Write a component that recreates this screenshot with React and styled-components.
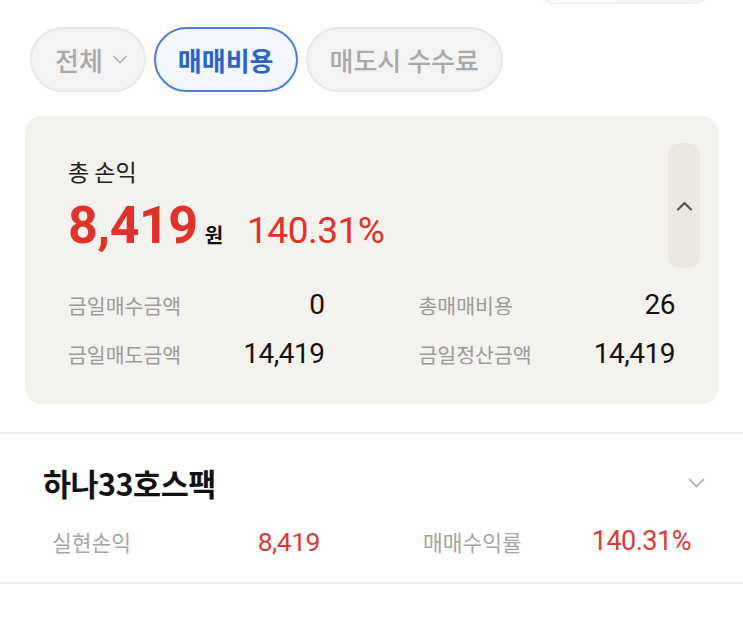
import React from 'react';
import styled, { createGlobalStyle } from 'styled-components';

const GlobalStyle = createGlobalStyle`
    body {
        margin: 0;
        background: #ffffff;
        font-family: Roboto, "Noto Sans CJK KR", sans-serif;
        color: #111111;
    }
`;

const Page = styled.div`
    width: 743px;
    min-height: 631px;
    background: #ffffff;
`;

const TopBar = styled.div`
    height: 4px;
    overflow: hidden;
    display: flex;
    align-items: flex-end;
    justify-content: flex-end;
    padding-right: 31px;
`;
const Segment = styled.div`
    flex-shrink: 0;
    width: 174px;
    height: 40px;
    border-radius: 20px;
    border: 1px solid #ececec;
    box-shadow: 0 1px 2px rgba(0, 0, 0, 0.05);
    background: linear-gradient(to right, #ffffff 0 45%, #f2f2f2 45% 100%);
    box-sizing: border-box;
`;

const ChipRow = styled.nav`
    display: flex;
    gap: 8px;
    padding: 23px 0 0 30px;
`;
const Chip = styled.button`
    height: 65px;
    box-sizing: border-box;
    display: flex;
    align-items: center;
    gap: 9px;
    padding: ${(p) => p.$pad || '0 24px'};
    border-radius: 33px;
    border: 2px solid ${(p) => (p.$active ? '#4c7fd8' : '#e8e8e8')};
    background: ${(p) => (p.$active ? '#f4f8fe' : '#f3f3f3')};
    color: ${(p) => (p.$active ? '#2d63c9' : '#a9a9a9')};
    font-family: "Noto Sans CJK KR", sans-serif;
    font-size: 26px;
    font-weight: ${(p) => (p.$active ? 700 : 500)};
    cursor: pointer;
`;

const Card = styled.section`
    margin: 24px 25px 0 25px;
    padding: 27px 18px 26px 43px;
    border-radius: 16px;
    background: #f4f2ed;
`;
const CardHeader = styled.div`
    display: flex;
    justify-content: space-between;
    margin-bottom: 12px;
`;
const Summary = styled.div`
    padding-top: 13px;
    display: flex;
    flex-direction: column;
    gap: 10px;
`;
const SummaryTitle = styled.div`
    font-family: "Noto Sans CJK KR", sans-serif;
    font-size: 23px;
    line-height: 30px;
    color: #222222;
`;
const AmountLine = styled.div`
    display: flex;
    align-items: baseline;
    height: 60px;
    line-height: 60px;
`;
const Amount = styled.span`
    font-size: 52px;
    font-weight: 700;
    color: #e0312a;
    letter-spacing: -0.5px;
`;
const Unit = styled.span`
    font-family: "Noto Sans CJK KR", sans-serif;
    font-size: 20px;
    font-weight: 700;
    color: #111111;
    margin-left: 7px;
`;
const Rate = styled.span`
    font-size: 37px;
    color: #e0312a;
    margin-left: 24px;
    letter-spacing: -0.5px;
`;
const Toggle = styled.button`
    width: 32px;
    height: 125px;
    border: none;
    border-radius: 12px;
    background: #ebe8e0;
    display: flex;
    align-items: center;
    justify-content: center;
    padding: 0;
`;

const StatGrid = styled.div`
    display: grid;
    grid-template-columns: 1fr 1fr;
    column-gap: ${(p) => p.$gap || '94px'};
    margin: ${(p) => p.$margin || '0 25px 0 0'};
`;
const Stat = styled.div`
    display: flex;
    justify-content: space-between;
    align-items: center;
    height: ${(p) => p.$height || '49px'};
`;
const StatLabel = styled.span`
    font-family: "Noto Sans CJK KR", sans-serif;
    font-size: ${(p) => p.$size || '20.5px'};
    color: ${(p) => p.$color || '#9b9b9b'};
`;
const StatValue = styled.span`
    font-size: ${(p) => p.$size || '28px'};
    color: ${(p) => p.$color || '#141414'};
    letter-spacing: -0.5px;
`;

const Divider = styled.div`
    height: 2px;
    background: #f3f3f3;
    margin-top: ${(p) => p.$top || '0'};
`;

const Stock = styled.section`
    padding: 29px 38px 26px 43px;
`;
const StockHeader = styled.div`
    display: flex;
    justify-content: space-between;
    align-items: center;
    height: 40px;
    margin-bottom: 23px;
`;
const StockName = styled.h2`
    margin: 0;
    font-family: "Noto Sans CJK KR", sans-serif;
    font-size: 30.5px;
    font-weight: 700;
    letter-spacing: -0.5px;
    color: #111111;
`;

const ChevronDown = ({ color = '#a9a9a9', w = 17, h = 10, sw = 1.8 }) => (
    <svg width={w} height={h} viewBox="0 0 17 10" fill="none">
        <path d="M1.5 1.5 L8.5 8.5 L15.5 1.5" stroke={color} strokeWidth={sw} strokeLinecap="round" strokeLinejoin="round" />
    </svg>
);

const ChevronUp = () => (
    <svg width="17" height="10" viewBox="0 0 17 10" fill="none">
        <path d="M2 8.5 L8.5 2 L15 8.5" stroke="#555555" strokeWidth="2.2" strokeLinecap="round" strokeLinejoin="round" />
    </svg>
);

const cardStats = [
    { label: '금일매수금액', value: '0' },
    { label: '총매매비용', value: '26' },
    { label: '금일매도금액', value: '14,419' },
    { label: '금일정산금액', value: '14,419' },
];

const App = () => {
    return (
        <Page>
            <GlobalStyle />
            <TopBar>
                <Segment />
            </TopBar>

            <ChipRow>
                <Chip $pad="0 16px 0 23px">
                    전체
                    <ChevronDown color="#b0b0b0" w={16} h={9} sw={1.6} />
                </Chip>
                <Chip $active $pad="0 22px">매매비용</Chip>
                <Chip $pad="0 22px">매도시 수수료</Chip>
            </ChipRow>

            <Card>
                <CardHeader>
                    <Summary>
                        <SummaryTitle>총 손익</SummaryTitle>
                        <AmountLine>
                            <Amount>8,419</Amount>
                            <Unit>원</Unit>
                            <Rate>140.31%</Rate>
                        </AmountLine>
                    </Summary>
                    <Toggle>
                        <ChevronUp />
                    </Toggle>
                </CardHeader>
                <StatGrid>
                    {cardStats.map((s) => (
                        <Stat key={s.label}>
                            <StatLabel>{s.label}</StatLabel>
                            <StatValue>{s.value}</StatValue>
                        </Stat>
                    ))}
                </StatGrid>
            </Card>

            <Divider $top="28px" />

            <Stock>
                <StockHeader>
                    <StockName>하나33호스팩</StockName>
                    <ChevronDown color="#b5b5b5" />
                </StockHeader>
                <StatGrid $gap="103px" $margin="0 14px 0 9px">
                    <Stat $height="30px">
                        <StatLabel $size="21.5px" $color="#a5a5a5">실현손익</StatLabel>
                        <StatValue $size="26.5px" $color="#d83c38">8,419</StatValue>
                    </Stat>
                    <Stat $height="30px">
                        <StatLabel $size="21.5px" $color="#a5a5a5">매매수익률</StatLabel>
                        <StatValue $size="27px" $color="#d83c38">140.31%</StatValue>
                    </Stat>
                </StatGrid>
            </Stock>

            <Divider />
        </Page>
    );
};

export default App;
